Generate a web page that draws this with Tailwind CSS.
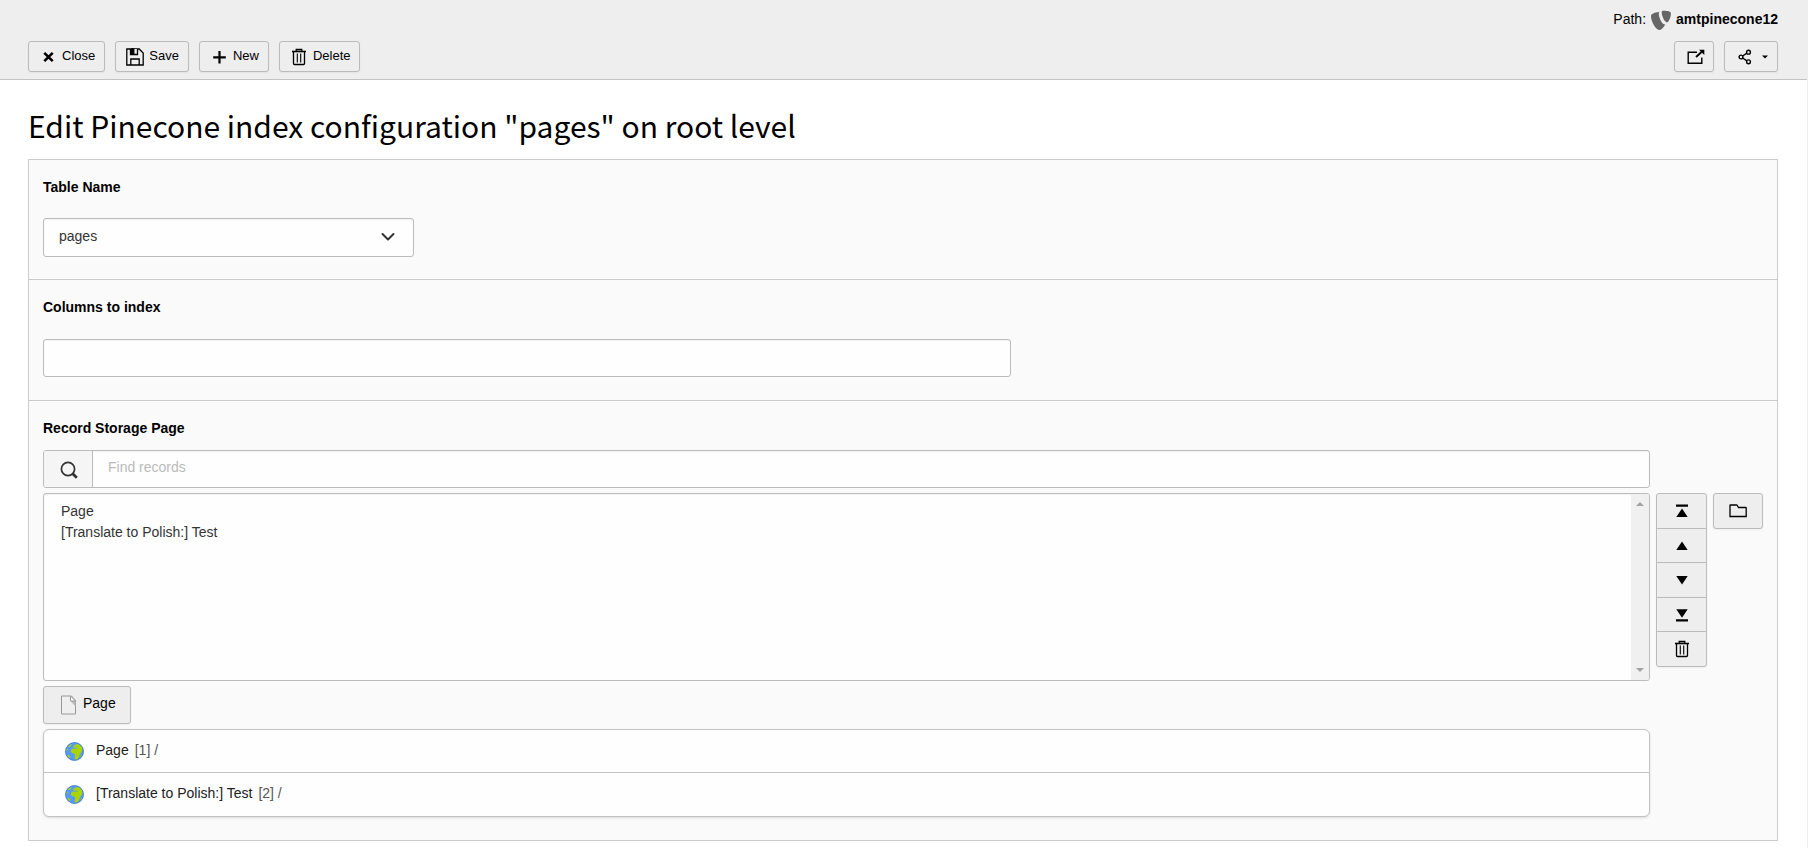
<!DOCTYPE html>
<html lang="en">
<head>
<meta charset="utf-8">
<meta name="viewport" content="width=device-width, initial-scale=1">
<title>Edit Pinecone index configuration</title>
<script src="https://cdn.jsdelivr.net/npm/@tailwindcss/browser@4"></script>
</head>
<body class="min-h-screen border-r border-[#eeeeee] bg-white font-['Liberation_Sans',Arial,sans-serif] text-sm leading-[21px] text-black">
<svg class="hidden" aria-hidden="true">
  <symbol id="trash" viewBox="0 0 16 18">
    <path d="M2.500 4v11.500q0 1 1 1h9q1 0 1-1V4" fill="none" stroke="currentColor" stroke-width="1.300"/>
    <path d="M1 3.500h14" stroke="currentColor" stroke-width="1.600"/>
    <path d="M5.200 3V1.300h5.600V3" fill="#777" stroke="currentColor" stroke-width="1.200"/>
    <path d="M6.300 5.500v9M9.700 5.500v9" stroke="currentColor" stroke-width="1.100"/>
  </symbol>
  <symbol id="globe" viewBox="0 0 20 20">
    <circle cx="10" cy="10" r="9.800" fill="#5599ff"/>
    <path d="M10.300 2.900 13 2.200l3.600 1.600 1.600 2.700-.2 3.200-1.900 2.600-1.200 3-1.700 3.100-1.700.4-1.400-1.300.5-4-1-1.500-2.400-.3-1.300-1.800 1-2.500 2-1.200-.5-1.300 1.100-.4z" fill="#aad400"/>
    <path d="M8.500 7l2.700-.8 1.800.7" stroke="#5599ff" stroke-width="1" fill="none"/>
    <path d="M3 5.200 5 3l2.500-1-1 1.700L5 5.500zM1.200 8l1.300-1.200.8 1.400-1.300 1.300zM2.500 13.500l2 .5 1.200 2-.4 1.200-2-1.700zM17 14l1.200-1-1 2.500-1.200.8z" fill="#aad400"/>
    <circle cx="10" cy="10" r="9.400" fill="none" stroke="#3f73bf" stroke-opacity=".7" stroke-width="1"/>
  </symbol>
</svg>

<header class="flex flex-col border-b border-[#c3c3c3] bg-[#eeeeee] pr-[29px] pb-[7px] pl-7">
  <div class="flex h-[41px] items-start justify-end gap-[5px] pt-[9px]">
    <span>Path:</span>
    <svg class="mt-px h-5 w-5" viewBox="0 0 20 20" fill="#666" aria-hidden="true">
      <path d="M14.400 14.300c-.3.100-.5.100-.9.100-2.500 0-5.700-7-5.700-10.600 0-1.300.3-1.800.7-2.100C5.300 2.100 1.500 3.200.3 4.700c-.2.300-.3.900-.3 1.500C0 11.800 5 20 8.700 20c1.700 0 4-2.400 5.700-5.700M12.900.8c3.500 0 7 .6 7 2.600 0 4.100-2.600 9-3.900 9-2.400 0-5.300-6.600-5.300-9.900 0-1.500.6-1.700 2.200-1.700"/>
    </svg>
    <strong>amtpinecone12</strong>
  </div>
  <div class="flex items-center justify-between">
    <div class="flex gap-[10px] text-[13px] leading-5">
      <button class="flex h-[31px] items-center gap-[5px] rounded-[3px] border border-[#bbbbbb] bg-[#eeeeee] pr-[9px] pb-[2px] pl-[10px] shadow-xs">
        <svg class="mt-[2px] h-[18px] w-[18px]" viewBox="0 0 18 18" stroke="currentColor" stroke-width="2.600" aria-hidden="true"><path d="M5.300 4.800l8.400 8.400M13.700 4.800l-8.400 8.400"/></svg>Close
      </button>
      <button class="flex h-[31px] items-center gap-[5px] rounded-[3px] border border-[#bbbbbb] bg-[#eeeeee] pr-[9px] pb-[2px] pl-[10px] shadow-xs">
        <svg class="mt-[2px] h-[18px] w-[18px]" viewBox="0 0 18 18" fill="none" stroke="currentColor" stroke-width="1.300" aria-hidden="true"><path d="M.8 1h12.400l4 4v12H.8zM4.800 17v-6h8.400v6"/><path d="M4.500 1v5.500h7V1" fill="#eee"/><path d="M5.600 1h2.200v5H5.600z" fill="currentColor"/></svg>Save
      </button>
      <button class="flex h-[31px] items-center gap-[5px] rounded-[3px] border border-[#bbbbbb] bg-[#eeeeee] pr-[9px] pb-[2px] pl-[10px] shadow-xs">
        <svg class="mt-[2px] h-[18px] w-[18px]" viewBox="0 0 18 18" stroke="currentColor" stroke-width="2.200" aria-hidden="true"><path d="M9.500 3v12.500M3.200 9.300h12.600"/></svg>New
      </button>
      <button class="flex h-[31px] items-center gap-[5px] rounded-[3px] border border-[#bbbbbb] bg-[#eeeeee] pr-[9px] pb-[2px] pl-[10px] shadow-xs">
        <svg class="mt-[2px] h-[18px] w-[18px]" aria-hidden="true"><use href="#trash"/></svg>Delete
      </button>
    </div>
    <div class="flex gap-[10px]">
      <button aria-label="Open in new window" class="flex h-[31px] w-10 items-center justify-center rounded-[3px] border border-[#bbbbbb] bg-[#eeeeee] pl-[3px] shadow-xs">
        <svg class="h-[18px] w-[18px]" viewBox="0 0 18 18" fill="none" stroke="currentColor" stroke-width="1.400" aria-hidden="true"><path d="M10 4.200H1.200v11h13.600V9.500"/><path d="M9 9l5.500-5" stroke-width="1.900"/><path d="M12 1.700h5.300v5.200z" fill="currentColor" stroke="none"/></svg>
      </button>
      <button aria-label="Share" class="flex h-[31px] w-[54px] items-center justify-center gap-[10px] rounded-[3px] border border-[#bbbbbb] bg-[#eeeeee] pl-1 shadow-xs">
        <svg class="h-4 w-[14px]" viewBox="0 0 14 16" fill="none" stroke="currentColor" stroke-width="1.400" aria-hidden="true"><circle cx="3" cy="8" r="1.900"/><circle cx="10.500" cy="3.200" r="1.900"/><circle cx="10.500" cy="12.800" r="1.900"/><path d="M4.600 7l4.300-2.800M4.600 9l4.300 2.800"/></svg>
        <svg class="h-1 w-[6px]" viewBox="0 0 6 4" aria-hidden="true"><path d="M0 .5h6L3 3.500z"/></svg>
      </button>
    </div>
  </div>
</header>

<main class="pr-[29px] pb-[7px] pl-7">
  <h1 class="pt-[25px] pb-[14px] font-['Noto_Sans_CJK_SC',sans-serif] text-[30px] leading-10">Edit Pinecone index configuration "pages" on root level</h1>

  <form class="flex flex-col divide-y divide-[#cccccc] border border-[#cccccc] bg-[#fafafa]">
    <section class="px-[14px] pt-[17px] pb-[22px]">
      <label for="table" class="block pb-5 font-bold">Table Name</label>
      <div class="relative w-[371px] max-w-full">
        <select id="table" class="block h-[39px] w-full appearance-none rounded-[3px] border border-[#bbbbbb] bg-[#fefefe] px-[15px] pb-[2px] text-[#333333] inset-shadow-xs"><option>pages</option></select>
        <svg class="pointer-events-none absolute top-[11px] right-[18px] h-4 w-4" viewBox="0 0 16 16" fill="none" stroke="#333" stroke-width="2" stroke-linecap="round" stroke-linejoin="round" aria-hidden="true"><path d="M2.500 5l5.500 5.500 5.500-5.500"/></svg>
      </div>
    </section>

    <section class="px-[14px] pt-[17px] pb-[23px]">
      <label for="columns" class="block pb-[21px] font-bold">Columns to index</label>
      <input id="columns" type="text" class="block h-[38px] w-[968px] max-w-full rounded-[3px] border border-[#bbbbbb] bg-[#fefefe] px-[15px] inset-shadow-xs">
    </section>

    <section class="px-[14px] pt-[17px] pb-[23px]">
      <label for="search" class="block pb-[11px] font-bold">Record Storage Page</label>
      <div class="grid grid-cols-[minmax(0,1fr)_auto] gap-x-[6px] gap-y-[5px]">
        <div class="flex h-[38px] overflow-hidden rounded-[3px] border border-[#bbbbbb] bg-[#fefefe]">
          <span class="flex w-[49px] items-center justify-center border-r border-[#bbbbbb] bg-[#f5f5f5] pt-px pl-px">
            <svg class="h-[18px] w-[18px]" viewBox="0 0 18 18" fill="none" stroke="#333" aria-hidden="true"><circle cx="8" cy="8" r="6.600" stroke-width="1.700"/><path d="M12.500 12.500l4.300 4.300" stroke-width="2.800"/></svg>
          </span>
          <input id="search" type="search" placeholder="Find records" class="min-w-0 flex-1 px-[15px] pb-[3px] inset-shadow-xs placeholder:text-[#bbbbbb]">
        </div>

        <div class="col-start-1 flex h-[188px] overflow-hidden rounded-[3px] border border-[#bbbbbb] bg-[#fefefe]">
          <select multiple aria-label="Selected records" class="min-w-0 flex-1 appearance-none overflow-hidden px-[15px] py-[9px] text-[#333333] inset-shadow-xs">
            <option class="h-[21px] px-[2px] leading-[21px]">Page</option>
            <option class="h-[21px] px-[2px] leading-[21px]">[Translate to Polish:] Test</option>
          </select>
          <div class="flex w-[18px] flex-col items-center justify-between bg-[#f0f0f0] py-2" aria-hidden="true">
            <svg class="h-1 w-2" viewBox="0 0 8 4" fill="#a3a3a3"><path d="M0 4l4-4 4 4z"/></svg>
            <svg class="h-1 w-2" viewBox="0 0 8 4" fill="#a3a3a3"><path d="M0 0l4 4 4-4z"/></svg>
          </div>
        </div>

        <div class="flex items-start gap-[6px]">
          <div class="flex w-[51px] flex-col divide-y divide-[#bbbbbb] rounded-[3px] border border-[#bbbbbb] bg-[#eeeeee] shadow-xs">
            <button type="button" aria-label="Move to top" class="flex h-[35px] items-center justify-center"><svg class="h-4 w-4" viewBox="0 0 16 16" aria-hidden="true"><path d="M2 1.500h12v2.300H2zM8 5.500l5.700 8.500H2.300z"/></svg></button>
            <button type="button" aria-label="Move up" class="flex h-[34px] items-center justify-center"><svg class="h-4 w-4" viewBox="0 0 16 16" aria-hidden="true"><path d="M8 3.500l5.700 8.500H2.300z"/></svg></button>
            <button type="button" aria-label="Move down" class="flex h-[35px] items-center justify-center"><svg class="h-4 w-4" viewBox="0 0 16 16" aria-hidden="true"><path d="M8 12.500l5.700-8.500H2.300z"/></svg></button>
            <button type="button" aria-label="Move to bottom" class="flex h-[34px] items-center justify-center"><svg class="h-4 w-4" viewBox="0 0 16 16" aria-hidden="true"><path d="M2 12.200h12v2.300H2zM8 10.700l5.700-8.500H2.300z"/></svg></button>
            <button type="button" aria-label="Remove" class="flex h-[34px] items-center justify-center"><svg class="h-[18px] w-4" aria-hidden="true"><use href="#trash"/></svg></button>
          </div>
          <button type="button" aria-label="Browse for records" class="flex h-9 w-[50px] items-center justify-center rounded-[3px] border border-[#bbbbbb] bg-[#eeeeee] pb-px shadow-xs">
            <svg class="h-[14px] w-[18px]" viewBox="0 0 18 14" fill="none" stroke="currentColor" stroke-width="1.300" aria-hidden="true"><path d="M1 12.500V1.500q0-.5.5-.5h6q.5 0 .8.500l1.200 2h7.200q.5 0 .5.500v8.500z"/></svg>
          </button>
        </div>

        <div class="col-start-1 flex">
          <button type="button" class="flex h-[38px] items-center gap-[5px] rounded-[3px] border border-[#bbbbbb] bg-[#eeeeee] px-[14px] pb-[3px] shadow-xs">
            <svg class="mt-[3px] h-5 w-5" viewBox="0 0 20 20" aria-hidden="true"><path d="M3.500 1h10l4 4.500V19h-14z" fill="#efefef" stroke="#999"/><path d="M12.500 6l5 5.500V6z" fill="#bbb"/><path d="M12.500 1v5h5z" fill="#fff" stroke="#999"/></svg>Page
          </button>
        </div>

        <ul class="col-start-1 divide-y divide-[#c3c3c3] rounded-md border border-[#c3c3c3] bg-[#fefefe] shadow-sm">
          <li class="flex h-[43px] items-center gap-3 px-[21px]">
            <svg class="h-[19px] w-[19px]" aria-hidden="true"><use href="#globe"/></svg>
            <span class="flex gap-[6px] pb-[2px]"><a href="#" class="text-[#212121]">Page</a><span class="text-[#555555]">[1] /</span></span>
          </li>
          <li class="flex h-[43px] items-center gap-3 px-[21px]">
            <svg class="h-[19px] w-[19px]" aria-hidden="true"><use href="#globe"/></svg>
            <span class="flex gap-[6px] pb-[2px]"><a href="#" class="text-[#212121]">[Translate to Polish:] Test</a><span class="text-[#555555]">[2] /</span></span>
          </li>
        </ul>
      </div>
    </section>
  </form>
</main>
</body>
</html>
